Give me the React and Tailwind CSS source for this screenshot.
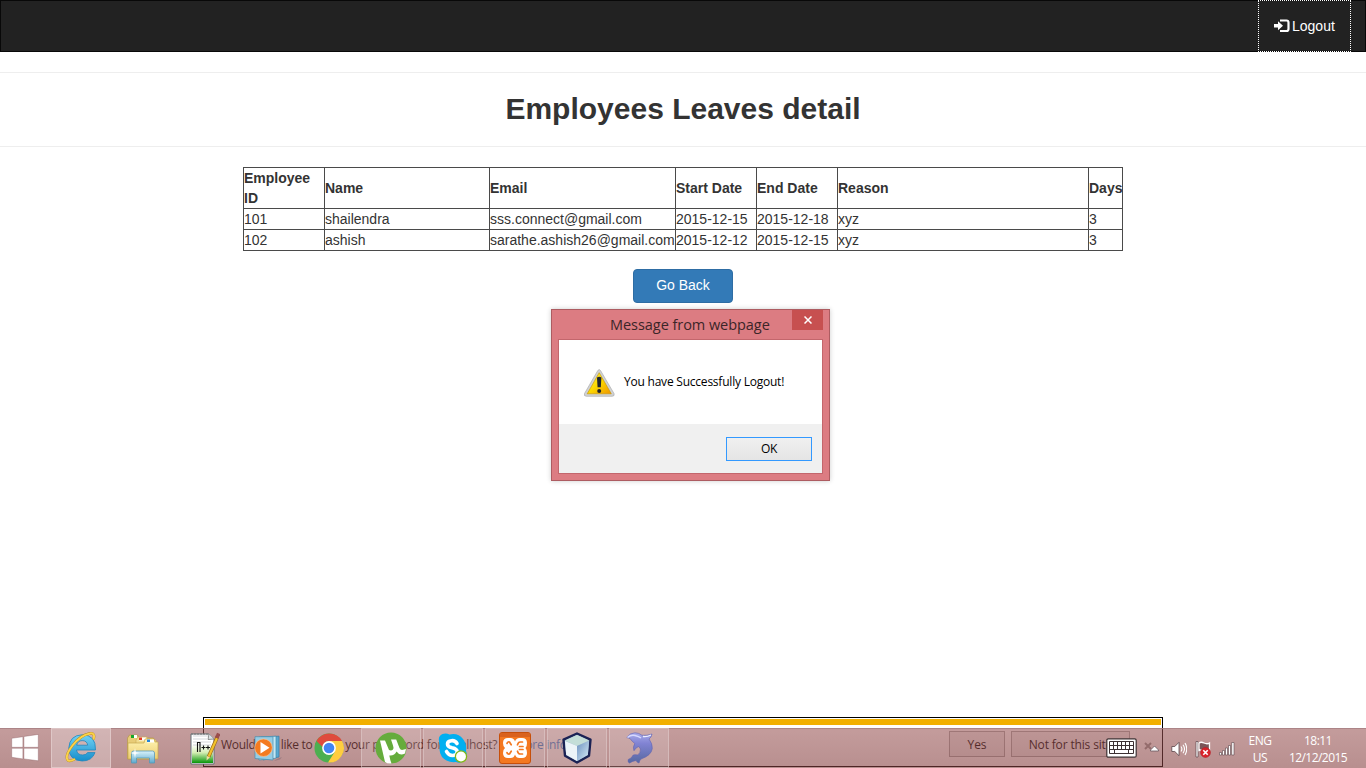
import React from "react";

const rows = [
  ["101", "shailendra", "sss.connect@gmail.com", "2015-12-15", "2015-12-18", "xyz", "3"],
  ["102", "ashish", "sarathe.ashish26@gmail.com", "2015-12-12", "2015-12-15", "xyz", "3"],
];
const headings = ["Employee ID", "Name", "Email", "Start Date", "End Date", "Reason", "Days"];

function Navbar() {
  return (
    <nav className="flex h-[52px] shrink-0 justify-end border border-[#080808] bg-[#222] pr-[14px]">
      <a className="-my-px flex w-[93px] items-center border border-dotted border-white pl-[15px] text-sm text-white">
        <svg width="16" height="14" viewBox="0 0 16 14" className="mr-[2px]" fill="none">
          <path d="M0 5h4V2.200L9 6.700 4 11.200V8.600H0z" fill="#fff" />
          <path d="M6 1.500h6.500q2 0 2 2v6.500q0 2-2 2H6" stroke="#fff" strokeWidth="2.200" />
        </svg>
        Logout
      </a>
    </nav>
  );
}

function LeavesTable() {
  return (
    <table className="mt-5 w-[880px] table-fixed border-separate border-spacing-0 border-r border-b border-[#4a4a4a] text-left text-sm leading-5 text-[#333]">
      <colgroup>
        <col className="w-[81px]" />
        <col className="w-[165px]" />
        <col className="w-[186px]" />
        <col className="w-[81px]" />
        <col className="w-[81px]" />
        <col className="w-[251px]" />
        <col className="w-[34px]" />
      </colgroup>
      <thead>
        <tr>
          {headings.map((h) => (
            <th key={h} className="border-t border-l border-[#4a4a4a] p-0 font-bold">{h}</th>
          ))}
        </tr>
      </thead>
      <tbody>
        {rows.map((r) => (
          <tr key={r[0]}>
            {r.map((c, i) => (
              <td key={i} className="border-t border-l border-[#4a4a4a] p-0 whitespace-nowrap">{c}</td>
            ))}
          </tr>
        ))}
      </tbody>
    </table>
  );
}

function WarningIcon() {
  return (
    <svg width="32" height="29" viewBox="0 0 32 29">
      <defs>
        <linearGradient id="warn" x1="0" y1="0" x2="1" y2="1">
          <stop offset="0" stopColor="#fff04a" />
          <stop offset=".5" stopColor="#fcd800" />
          <stop offset="1" stopColor="#ef9500" />
        </linearGradient>
      </defs>
      <path d="M14.800 1.500q1.500-1.800 2.700 0L31 24.500q1 2.800-2 2.800H3.500q-3 0-2-2.800z" fill="#d0d2d4" stroke="#a5a5a5" strokeWidth=".6" />
      <path d="M16.200 3.700L28.300 24.800H4.200z" fill="url(#warn)" stroke="#c69200" strokeWidth=".6" />
      <path d="M14 8.500q2.200-1.300 4.400 0l-.6 9.800h-3.200z" fill="#20242c" />
      <circle cx="16.200" cy="22" r="2" fill="#20242c" />
    </svg>
  );
}

function MessageDialog() {
  return (
    <div className="absolute top-[309px] left-[551px] flex h-[172px] w-[279px] flex-col border border-[#ad5c61] bg-[#dc7c82] px-[6px] pb-[6px] font-['Open_Sans',sans-serif] shadow-[0_0_5px_rgba(0,0,0,0.2)]">
      <div className="flex h-[29px] shrink-0">
        <span className="flex-1 pt-[4px] pl-[52px] text-[14.500px] leading-[22px] tracking-[-0.050px] whitespace-nowrap text-[#3b2528]">Message from webpage</span>
        <button className="flex h-5 w-[31px] items-center justify-center bg-[#c75050]">
          <svg width="8" height="8" viewBox="0 0 8 8" stroke="#fff" strokeWidth="1.500"><path d="M.5.5l7 7M7.500.5l-7 7" /></svg>
        </button>
      </div>
      <div className="flex min-h-0 flex-1 flex-col border border-[#c3666c] bg-white">
        <div className="flex h-[84px] items-start pt-[29px] pl-[24px]">
          <WarningIcon />
          <p className="mt-[4px] ml-[9px] text-[12px] leading-[18px] tracking-[-0.220px] whitespace-nowrap text-black">You have Successfully Logout!</p>
        </div>
        <div className="flex flex-1 justify-end bg-[#f0f0f0] pt-[13px] pr-[10px]">
          <button className="h-[24px] w-[86px] border border-[#3399ff] bg-linear-to-b from-[#f0f0f0] to-[#e5e5e5] text-[12px] leading-[22px] tracking-[-0.4px] text-black">OK</button>
        </div>
      </div>
    </div>
  );
}

function PasswordPrompt() {
  return (
    <div className="absolute top-[717px] left-[203px] flex h-[50px] w-[960px] flex-col border border-black bg-white px-px pt-px font-['Open_Sans',sans-serif] text-[12px] text-black">
      <div className="h-[6px] shrink-0 bg-[#f2b000]" />
      <div className="flex h-[41px] items-start pt-[6px] pl-4">
        <span className="mt-[5px] w-[294px] leading-[18px] tracking-[-0.310px] whitespace-nowrap">Would you like to store your password for localhost?</span>
        <span className="mt-[5px] leading-[18px] tracking-[-0.320px] text-[#0066cc]">More info</span>
        <span className="flex-1" />
        <button className="h-[26px] w-[56px] border border-[#aaa] bg-[#f0f0f0] pt-[2px] tracking-[-0.1px]">Yes</button>
        <button className="ml-[6px] h-[26px] w-[119px] border border-[#aaa] bg-[#f0f0f0] pt-[2px] tracking-[-0.150px]">Not for this site</button>
        <svg className="mt-[11px] mr-[9px] ml-[14px]" width="8" height="8" viewBox="0 0 8 8" stroke="#999" strokeWidth="2"><path d="M1 1l6 6M7 1L1 7" /></svg>
      </div>
    </div>
  );
}

function WindowsLogo() {
  return (
    <svg width="28" height="28" viewBox="0 0 28 28" fill="#fff" stroke="#8d6165" strokeWidth=".4">
      <path d="M.7 4.300L11.900 2.700v10.600H.7zM12.900 2.500L27.300.4v12.900H12.900zM.7 14.300h11.200v10.600L.7 23.300zM12.900 14.300h14.400v12.500l-14.400-1.900z" />
    </svg>
  );
}

function ExplorerE() {
  return (
    <svg width="34" height="34" viewBox="0 0 34 34" fill="none">
      <defs>
        <linearGradient id="ie" x1="0" y1="0" x2="0" y2="1"><stop stopColor="#73d2f5" /><stop offset="1" stopColor="#168ecb" /></linearGradient>
      </defs>
      <path d="M31.500 20H12.500q.8 5 6.200 5 3.800 0 4.800-2.400h7.500Q28 31 18.200 31 4.800 30.300 4.800 18 5.500 5.300 18.100 4.800 32 4.800 31.500 20zM12.700 15.200h11Q23 10.600 18.200 10.600q-4.500 0-5.500 4.600z" fill="url(#ie)" stroke="#2186bd" strokeWidth=".8" />
      <path d="M29.500 9.500Q31.500 2.700 26 3.400 16.500 5 8.500 15.500.5 26 3.800 30.200 6 32 11 29" stroke="#b98a18" strokeWidth="2.600" />
      <path d="M29.500 9.500Q31.500 2.700 26 3.400 16.500 5 8.500 15.500.5 26 3.800 30.200 6 32 11 29" stroke="#fbd24a" strokeWidth="2" />
    </svg>
  );
}

function Folder() {
  return (
    <svg width="34" height="32" viewBox="0 0 34 32">
      <defs>
        <linearGradient id="fold" x1="0" y1="0" x2="0" y2="1"><stop stopColor="#fff4b3" /><stop offset="1" stopColor="#edcd70" /></linearGradient>
        <linearGradient id="stand" x1="0" y1="0" x2="0" y2="1"><stop stopColor="#d9f3fb" /><stop offset="1" stopColor="#5da9cd" /></linearGradient>
      </defs>
      <path d="M1.500 26V5l2-3h8l1 3h15l1 3v18z" fill="#e8cc77" stroke="#b49849" strokeWidth=".7" />
      <path d="M5 2h6v3H5z" fill="#fff" /><path d="M5 2h3v3H5z" fill="#14a82a" />
      <path d="M10 7l2-3h9l1 3h8v15H10z" fill="#f2dc8d" stroke="#c9ab57" strokeWidth=".6" />
      <path d="M13 4.500h7v3h-7z" fill="#fff" /><path d="M13 4.500h3v2.500h-3z" fill="#e33b24" />
      <path d="M18 10l1-4h9l1 3h3v17H2V10z" fill="url(#fold)" stroke="#c6a84d" strokeWidth=".7" />
      <path d="M21 6.500h7v3h-7z" fill="#fff" /><path d="M21 6.500h3V9h-3z" fill="#2585d8" />
      <path d="M5.500 30V20q0-2 2-2h19q2 0 2 2v10h-5v-5h-13V30z" fill="url(#stand)" stroke="#5799b7" strokeWidth=".8" />
      <path d="M9 15l.8 4.200 4.200.8-4.200.8L9 25l-.8-4.200L4 20l4.200-.8z" fill="#fff" />
    </svg>
  );
}

function Notepad() {
  return (
    <svg width="30" height="33" viewBox="0 0 30 33" fill="none">
      <defs><linearGradient id="note" x1="0" y1="0" x2="0" y2="1"><stop offset=".2" stopColor="#fff" /><stop offset=".55" stopColor="#d5eeb4" /><stop offset="1" stopColor="#079509" /></linearGradient></defs>
      <path d="M1 2h18l5 5v25H1z" fill="#fff" stroke="#647077" />
      <path d="M2 8h21v23H2z" fill="url(#note)" />
      <path d="M3 4h15M3 7h14M3 10h18M3 13h18" stroke="#b8bec2" strokeWidth=".6" />
      <path d="M2 1v2M5 1v2M8 1v2M11 1v2M14 1v2M17 1v2" stroke="#777" />
      <path d="M19 2l-1 5.500 6-.5" fill="#dde3e5" stroke="#777" strokeWidth=".8" />
      <path d="M7.500 20V10.500h2.500V20M11.500 15.500h4M13.500 13.500v4M16 15.500h4M18 13.500v4" stroke="#111" strokeWidth="1.100" />
      <path d="M27.500 4.500L18.500 25" stroke="#9a681d" strokeWidth="3.600" />
      <path d="M27 6L18.700 24.500" stroke="#f3c22b" strokeWidth="2.200" />
      <path d="M28.800 1.500l-2.200 4.500" stroke="#9b4c4c" strokeWidth="3.800" />
      <path d="M16.800 24l3.200 1.300-3.500 3.200z" fill="#f3dda6" />
    </svg>
  );
}

function MediaPlayer() {
  return (
    <svg width="30" height="27" viewBox="0 0 30 27">
      <path d="M24 24l5-2-2 2.500-6 1.500z" fill="#7d6670" opacity=".5" />
      <path d="M8 2l18-.8V22L10 25z" fill="#5aa8d0" stroke="#327da8" strokeWidth=".7" />
      <path d="M6 2l17-.8v22L6 25z" fill="#c4e7f4" stroke="#438cad" strokeWidth=".7" />
      <path d="M2 1.700h18V25L2 23.500z" fill="#95cde5" stroke="#4b8dac" strokeWidth=".7" />
      <circle cx="10.500" cy="12.700" r="8.800" fill="#f47b20" stroke="#fbc193" strokeWidth=".7" />
      <path d="M7.500 7L16.500 12.700 7.500 18.400z" fill="#fff" />
    </svg>
  );
}

function Chrome() {
  return (
    <svg width="30" height="30" viewBox="0 0 30 30">
      <circle cx="15" cy="15" r="14.500" fill="#4caf50" />
      <path d="M15 8h13A14.500 14.500 0 0 1 14 29.500L21 18.500z" fill="#ffcd40" />
      <path d="M2.500 8Q7 .5 15 .5 24 .5 28 8H15q-5 0-6.500 6z" fill="#df4b3d" />
      <circle cx="15" cy="15" r="6.900" fill="#fff" /><circle cx="15" cy="15" r="5.300" fill="#4285f4" />
    </svg>
  );
}

function Utorrent() {
  return (
    <svg width="32" height="32" viewBox="0 0 32 32" fill="none">
      <circle cx="16" cy="16" r="15.500" fill="#65ac3c" />
      <path d="M5 8.500h5l4 9.500q2.500 1 4-.5 1-1.500 0-4L16 7.500h5.200l3.300 8.500q1.200 2.500 3.500 1.800l3-.8-1 4.500q-5.500 2.500-8.500-2-2 4.500-7.200 4 .7 4 2.200 8-4 .5-6.500-1.500z" fill="#fff" />
    </svg>
  );
}

function Skype() {
  return (
    <svg width="30" height="31" viewBox="0 0 30 31" fill="none">
      <path d="M1 8Q0 3 4.500 1 8-.4 11.500 1.500 20-.5 25 6q4 5 3 12 2 5-1 9-4 4-9 2Q9 30 4 24 .5 19 2 13q-1-2-1-5z" fill="#00aff0" />
      <path d="M19 10.500Q17 7.200 13.500 7.700q-4 .5-4 3.300 0 2.800 4.500 3.800 5.200 1 5.200 4.200 0 3.500-4.700 3.500-4 0-6-4" stroke="#fff" strokeWidth="3.600" strokeLinecap="round" />
      <circle cx="23" cy="23.500" r="5.600" fill="#fff" stroke="#83b817" strokeWidth="1.300" />
    </svg>
  );
}

function Xampp() {
  return (
    <svg width="32" height="32" viewBox="0 0 32 32" fill="none">
      <rect x=".5" y=".5" width="31" height="31" rx="2.500" fill="#f47820" stroke="#c64f0b" />
      <path d="M1 2.500q0-1.500 1.500-1.500h27q1.500 0 1.500 1.500V5H1z" fill="#d9621e" />
      <path d="M4 11q0-5 5-5h2.500q3.500 0 4.500 3.500Q17 6 20.500 6H23q5 0 5 5 0 3.500-1.500 5Q28 17.500 28 21q0 5-5 5h-2.500q-3.500 0-4.500-3.500Q15 26 11.500 26H9q-5 0-5-5 0-3.500 2-5-2-1.500-2-5z" fill="#fff" />
      <path d="M8 11.500q.5-2 2.500-1.500l1.700 2.800M8 20.500q.5 2 2.500 1.500l1.700-2.800M18.500 12.800q.8-3 3-2.800h2M18.500 19.200q.8 3 3 2.800h2M20.500 14.500h3.500M20.500 17.500h3.500" stroke="#f47820" strokeWidth="1.700" strokeLinecap="round" />
    </svg>
  );
}

function Cube() {
  return (
    <svg width="32" height="32" viewBox="0 0 32 32">
      <defs><linearGradient id="cube" x1="0" y1="0" x2="1" y2="1"><stop stopColor="#6c91bf" /><stop offset="1" stopColor="#d9edf8" /></linearGradient></defs>
      <path d="M16 1.500l13.500 6.200-1.500 16L16 30.500 4 23.700 2.500 7.700z" fill="#a5bdd1" stroke="#1b2254" strokeWidth="2.400" strokeLinejoin="round" />
      <path d="M4 8.500L16 3l12 5.500L16 14z" fill="#c4ded8" />
      <path d="M4 9l12 5v15L5.200 22.800z" fill="#edf4f8" />
      <path d="M28 9l-12 5v15l10.800-6.200z" fill="url(#cube)" />
    </svg>
  );
}

function Dolphin() {
  return (
    <svg width="28" height="32" viewBox="0 0 28 32">
      <defs><linearGradient id="dolphin" x1="0" y1="0" x2="0" y2="1"><stop stopColor="#a9acea" /><stop offset=".35" stopColor="#8183d3" /><stop offset="1" stopColor="#5668a0" /></linearGradient></defs>
      <path d="M.8 5.500Q4 .8 9 .8q4 0 7 2.500 5 .5 10-1.300-.5 3.500-3 5 3.500 4.500 3.300 9.500-1 7-11.300 10.500-1.500 1.500-2 4-2-.5-3-2.500-3.500.5-6.500 2.500-2-.5-1.300-3.500 3.500-1 5-4.500 2-.7 4.500 0 3-2 2.800-6l-1.800-2.500q-3 1-4.700 4.200-1.500-3.500.8-7.200Q6 9.500 4 6.500z" fill="url(#dolphin)" stroke="#6062b0" strokeWidth=".6" />
      <path d="M1.500 5.500Q5 2.500 9 3.500t6 2.500" fill="none" stroke="#d6d9ff" strokeWidth="1.500" />
      <path d="M17 4.500q4 .6 8-1.500" fill="none" stroke="#eef0ff" strokeWidth="1.300" />
    </svg>
  );
}

const apps = [
  { Icon: ExplorerE, open: true, active: true, nudge: "mb-[3px]" },
  { Icon: Folder, open: false, nudge: "mt-[2px]" },
  { Icon: Notepad, open: false, nudge: "" },
  { Icon: MediaPlayer, open: false, nudge: "ml-[2px]" },
  { Icon: Chrome, open: false, nudge: "" },
  { Icon: Utorrent, open: true, nudge: "mb-px" },
  { Icon: Skype, open: true, nudge: "" },
  { Icon: Xampp, open: true, nudge: "mb-px" },
  { Icon: Cube, open: true, nudge: "mb-px" },
  { Icon: Dolphin, open: true, nudge: "mb-px ml-[2px]" },
];

function Tray() {
  return (
    <div className="ml-auto flex items-start text-white">
      <svg className="mt-[9px]" width="31" height="20" viewBox="0 0 31 20" fill="none" stroke="#3c3032">
        <rect x=".8" y=".8" width="29.400" height="18.400" rx="1.500" fill="#fff" strokeWidth="1.200" />
        <path d="M3.500 3.500h24v12h-24zM3.500 7.500h24M3.500 11.500h24M7.500 3.500v8M11.500 3.500v8M15.500 3.500v8M19.500 3.500v8M23.500 3.500v8M8.500 11.500v4M22.500 11.500v4" />
      </svg>
      <svg className="mt-[16px] ml-[13px]" width="9" height="7" viewBox="0 0 9 7"><path d="M.5 6V5l4-4 4 4v1z" fill="#fff" stroke="#65575e" strokeWidth=".8" /></svg>
      <svg className="mt-[12px] ml-[12px]" width="16" height="16" viewBox="0 0 16 16" fill="none" stroke="#fff">
        <path d="M.8 5.500h3L8 1.300v13.400l-4.200-4.200h-3z" fill="#fff" stroke="#594449" strokeWidth=".8" />
        <path d="M10 5.500q1.800 2.500 0 5M12 3.700q3 4.300 0 8.600M14 2q3.500 6 0 12" strokeWidth="1.100" />
      </svg>
      <svg className="mt-[12px] ml-[8px]" width="16" height="17" viewBox="0 0 16 17" fill="none">
        <path d="M1 .5h2V16H1z" fill="#fff" stroke="#594449" strokeWidth=".7" />
        <path d="M4 2q2-1.500 5 0t5.500 0v7.500q-3 1.500-5.500 0-3-1-5 0z" fill="#7b5558" stroke="#fff" strokeWidth="1.300" />
        <circle cx="10.500" cy="11.500" r="4.900" fill="#da232a" stroke="#b51d24" strokeWidth=".6" />
        <path d="M8.300 9.300l4.400 4.400M12.700 9.300l-4.400 4.400" stroke="#fff" strokeWidth="1.600" />
      </svg>
      <svg className="mt-[13px] ml-[8px]" width="16" height="14" viewBox="0 0 16 14" fill="#fff" stroke="#594449" strokeWidth=".6">
        <path d="M.5 10.500h2v2.500h-2zM3.500 8.500h2V13h-2zM6.500 6h2v7h-2zM9.500 3.500h2V13h-2zM12.700.5h2.300V13h-2.300z" />
      </svg>
      <div className="ml-[5px] w-[40px] pt-[3px] text-center text-[12px] leading-[17px] tracking-[-0.450px]">
        <div>ENG</div>
        <div>US</div>
      </div>
      <div className="mr-[10px] w-[76px] pt-[3px] text-center text-[12px] leading-[17px] tracking-[-0.550px]">
        <div>18:11</div>
        <div>12/12/2015</div>
      </div>
    </div>
  );
}

function Taskbar() {
  return (
    <footer className="relative mt-auto flex h-10 shrink-0 border-t border-[#a98184]/80 bg-linear-to-b from-[#995454]/58 to-[#853e3e]/58 font-['Open_Sans',sans-serif]">
      <div className="flex w-[51px] items-center pb-[2px] pl-[11px]"><WindowsLogo /></div>
      <div className="-mt-px flex gap-[2px]">
        {apps.map(({ Icon, open, active, nudge }, i) => (
          <div key={i} className={`flex h-10 w-[60px] items-center justify-center border ${open ? (active ? "border-[#e2cccc]/80 bg-white/25" : "border-[#dfc9c9]/60 bg-white/15") : "border-transparent"}`}>
            <span className={nudge}><Icon /></span>
          </div>
        ))}
      </div>
      <Tray />
    </footer>
  );
}

export default function App() {
  return (
    <div className="relative flex h-[768px] w-[1366px] flex-col overflow-hidden bg-white font-['Liberation_Sans',Arial,sans-serif]">
      <Navbar />
      <main className="flex flex-col items-center">
        <h1 className="mt-5 flex h-[75px] w-full items-center justify-center border-y border-[#eee] pb-px text-[30px] leading-none font-bold text-[#333]">Employees Leaves detail</h1>
        <LeavesTable />
        <button className="mt-[18px] h-[34px] w-[100px] rounded border border-[#2e6da4] bg-[#337ab7] pb-[2px] text-sm text-white">Go Back</button>
      </main>
      <MessageDialog />
      <PasswordPrompt />
      <Taskbar />
    </div>
  );
}
